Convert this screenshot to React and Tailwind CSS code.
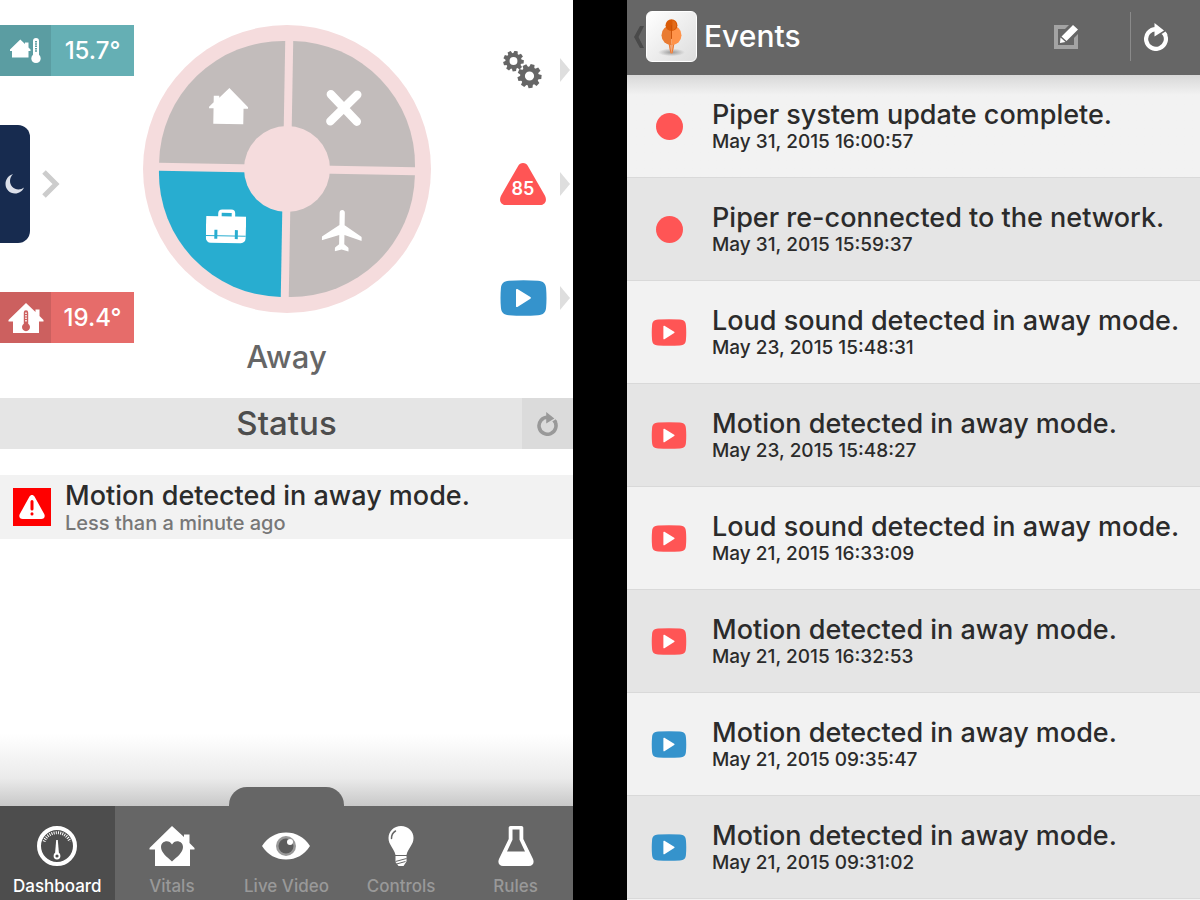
import React from 'react';
import clsx from 'clsx';

const EVENTS = [
  { kind: 'system', title: 'Piper system update complete.', date: 'May 31, 2015 16:00:57' },
  { kind: 'system', title: 'Piper re-connected to the network.', date: 'May 31, 2015 15:59:37' },
  { kind: 'alarm', title: 'Loud sound detected in away mode.', date: 'May 23, 2015 15:48:31' },
  { kind: 'alarm', title: 'Motion detected in away mode.', date: 'May 23, 2015 15:48:27' },
  { kind: 'alarm', title: 'Loud sound detected in away mode.', date: 'May 21, 2015 16:33:09' },
  { kind: 'alarm', title: 'Motion detected in away mode.', date: 'May 21, 2015 16:32:53' },
  { kind: 'clip', title: 'Motion detected in away mode.', date: 'May 21, 2015 09:35:47' },
  { kind: 'clip', title: 'Motion detected in away mode.', date: 'May 21, 2015 09:31:02' },
];

/* ---------- Icons ---------- */

function HomeIcon() {
  return (
    <svg viewBox="0 0 40 40" className="size-10" fill="#fff">
      <path d="M21 0 40 19v1.500h-4.500V36H5.500V20.500H1V19l4.500-4.500V8h5.500v2z" />
    </svg>
  );
}

function OffIcon() {
  return (
    <svg viewBox="0 0 40 40" className="size-10" stroke="#fff" strokeWidth="8.4" strokeLinecap="round">
      <path d="M6.500 4.500 33 31.500M33 4.500 6.500 31.500" />
    </svg>
  );
}

function BriefcaseIcon() {
  return (
    <svg viewBox="0 0 40 40" className="size-10">
      <path
        fill="#fff"
        fillRule="evenodd"
        d="M0 8.500h12V5.500a4 4 0 0 1 4-4h9a4 4 0 0 1 4 4v3h11V30a5 5 0 0 1-5 5H5a5 5 0 0 1-5-5zM15.500 8.500h10V5h-10z"
      />
      <path stroke="#28add0" d="M0 28h40" />
      <path stroke="#28add0" strokeWidth="3" d="M10 22v9M30.500 22v9" />
    </svg>
  );
}

function PlaneIcon() {
  return (
    <svg viewBox="0 0 40 42" className="h-[42px] w-10" fill="#fff">
      <path d="M20 0c1.800 0 2.600 1.300 2.600 3v12.200L39.500 26.500c.4.300.5.600.5 1v3.200L22.600 25v9.300l3.900 3c.3.300.4.600.4 1v3L20 39.500l-6.700 1.800v-3c0-.4.100-.7.400-1l3.700-3V25L0 30.700v-3.200c0-.4.100-.7.500-1l16.900-11.300V3c0-1.700.8-3 2.600-3z" />
    </svg>
  );
}

function OutdoorIcon() {
  return (
    <svg viewBox="0 0 32 26" className="h-[26px] w-8">
      <path fill="#fff" d="M10.300 1.500 15 6V4.500h3.500v5l2 2V13h-2v6.500H2V13H0v-1.500z" />
      <path fill="#fff" d="M23 3a3 3 0 0 1 6 0v13.800a4.700 4.700 0 1 1-6 0z" />
      <path stroke="#5b9da2" strokeWidth="2" strokeDasharray="1.500 .8" d="M26 3v11" />
    </svg>
  );
}

function IndoorIcon() {
  return (
    <svg viewBox="0 0 36 32" className="h-8 w-9">
      <path fill="#fff" d="m18 1 9.500 9V7.500h4V14l4 4v1.500H31V31H5V19.500H.5V18z" />
      <path fill="#cc605f" d="M15.800 10.500a2.200 2.200 0 0 1 4.400 0v11.300a4 4 0 1 1-4.400 0z" />
      <path stroke="#fff" strokeWidth="1.500" strokeDasharray="1.500 1" d="M18 10.500v9" />
    </svg>
  );
}

function MoonIcon() {
  return (
    <svg viewBox="0 0 20 20" className="size-5" fill="#dce0ea">
      <path d="M8 0C3.500 1.500.5 5.300.5 10c0 5.300 4.300 9.500 9.500 9.500 4 0 7.600-2.500 9-6-1.500 1.200-3.500 2-5.500 2-4.800 0-8.500-3.700-8.500-8.500C5 4.300 6.200 1.800 8 0z" />
    </svg>
  );
}

function Gear({ x, y, r }) {
  return (
    <g transform={`translate(${x} ${y}) scale(${r / 12})`}>
      {[0, 40, 80, 120, 160, 200, 240, 280, 320].map((angle) => (
        <path key={angle} d="M-2.900-7-2-12H2l.9 5z" fill="#666" transform={`rotate(${angle + 15})`} />
      ))}
      <circle r="7" fill="none" stroke="#666" strokeWidth="4.800" />
    </g>
  );
}

function GearsIcon() {
  return (
    <svg viewBox="0 0 40 38" className="h-[38px] w-10">
      <Gear x={10.5} y={10} r={10.3} />
      <Gear x={26.5} y={25} r={12} />
    </svg>
  );
}

function TriangleIcon() {
  return (
    <svg viewBox="0 0 46 42" className="h-[42px] w-[46px]" fill="#ff5555">
      <path d="M18 3.200c2-4.200 8-4.200 10 0l17 29.500c2.300 4.600.3 9.300-5 9.300H6c-5.300 0-7.300-4.700-5-9.300z" />
    </svg>
  );
}

function PlayIcon({ className }) {
  return (
    <svg viewBox="0 0 47 36" className={className}>
      <path fill="currentColor" d="M9 .8Q23.500-.2 38 .8c5.500.4 7.700 2.700 8.100 7.700q.8 9.500 0 19c-.4 5-2.600 7.300-8.100 7.700q-14.500 1-29 0c-5.500-.4-7.700-2.700-8.100-7.700q-.8-9.500 0-19C1.300 3.500 3.500 1.200 9 .8z" />
      <path fill="#fff" d="M16 9.800c0-.8.600-1.200 1.400-.7l13 8c.7.500.7 1.100 0 1.600l-13 8.200c-.8.500-1.400.1-1.400-.7z" />
    </svg>
  );
}

function RefreshIcon({ className }) {
  return (
    <svg viewBox="0 0 24 28" className={className}>
      <path fill="none" stroke="currentColor" strokeWidth="4.200" d="M12 6.100A9.900 9.900 0 1 0 20.300 10.600" />
      <path fill="currentColor" d="M10.500 0 20 7.500l-9.500 6zM17.500 11l4-2.500 2 3-3 2z" />
    </svg>
  );
}

function EditIcon() {
  return (
    <svg viewBox="0 0 25 26" className="h-[26px] w-[25px]">
      <path fill="#a3a3a3" d="M0 1h15l-4 4H4v16h16v-7l4-4v15H0z" />
      <path fill="#fff" d="M19 1 24 5.500 12.500 17 7.500 12.500zM6.500 13.500l5 4.500-5.500 1z" />
    </svg>
  );
}

function WarningIcon() {
  return (
    <svg viewBox="0 0 26 24" className="h-6 w-[26px]">
      <path fill="#fff" d="M10.500 1.600c1-2.100 4-2.100 5 0l9.700 17.400c1.300 2.700 0 5-3 5H3.800c-3 0-4.300-2.300-3-5z" />
      <path stroke="#f00" strokeWidth="3" strokeLinecap="round" d="M13 6.500v7.500M13 18.700v.2" />
    </svg>
  );
}

function PiperLogo() {
  return (
    <svg viewBox="0 0 51 51" className="size-full">
      <defs>
        <radialGradient id="pin-shadow">
          <stop offset="0" stopColor="#999" />
          <stop offset="1" stopColor="#999" stopOpacity="0" />
        </radialGradient>
      </defs>
      <ellipse cx="25.500" cy="42" rx="14" ry="4" fill="url(#pin-shadow)" />
      <path fill="#f4a878" d="M22.500 33h6l-1.800 10h-2.400z" />
      <path stroke="#e8762f" d="m23 33 2 10M28 33l-2 10" />
      <path fill="#e97b32" d="M25.500 13.700a10.400 10.400 0 0 0 0 20.800z" />
      <path fill="#ff934a" d="M25.500 13.700a10.400 10.400 0 0 1 0 20.800z" />
      <circle cx="25.500" cy="13.700" r="6.200" fill="#d95a07" />
      <path fill="#e26c1b" d="M26.500 8.500a5.500 5.500 0 0 1 0 10.500z" />
      <path stroke="#c95208" d="M25.500 14v14" />
    </svg>
  );
}

function DashboardIcon() {
  return (
    <svg viewBox="0 0 40 40" className="size-10" fill="none" stroke="#fff">
      <circle cx="20" cy="20" r="18" strokeWidth="4" />
      <path strokeWidth="3" strokeDasharray="1 1.200" d="M7 15.500a14 14 0 0 1 26 0" />
      <path fill="#fff" stroke="none" d="M19.200 14h1.600l1.200 14h-4z" />
      <circle cx="20" cy="30" r="2.500" strokeWidth="1.800" />
    </svg>
  );
}

function VitalsIcon() {
  return (
    <svg viewBox="0 0 46 40" className="h-10 w-[46px]">
      <path fill="#fff" d="m23 0 12 11V8.500h5.500V17l5 5v1.500H41V40H6V23.500H.5V22z" />
      <path fill="#666" d="M23 35.500C18 31 12 26.500 12 21c0-6.500 8.500-8 11-2.500C25.500 13 34 14.500 34 21c0 5.500-6 10-11 14.500z" />
    </svg>
  );
}

function EyeIcon() {
  return (
    <svg viewBox="0 0 48 40" className="h-10 w-12">
      <path fill="#fff" d="M0 20C6 11 14 6.500 24 6.500S42 11 48 20C42 29 34 33.500 24 33.500S6 29 0 20z" />
      <circle cx="24" cy="20" r="10" fill="#999" />
      <circle cx="24" cy="20" r="7.500" fill="#5c5c5c" />
      <circle cx="28" cy="16" r="3" fill="#fff" />
    </svg>
  );
}

function BulbIcon() {
  return (
    <svg viewBox="0 0 26 40" className="h-10 w-[26px]">
      <path fill="#fff" d="M13 0c7 0 12.500 5.300 12.500 12 0 7-5.500 10-7 17v6.500L15.500 40h-5L7.500 36v-7C6 22 .5 19 .5 12 .5 5.300 6 0 13 0z" />
      <path fill="none" stroke="#666" strokeWidth="1.500" strokeLinecap="round" d="M3.500 12.500c0-3.500 1.300-6 4-7.500" />
      <path stroke="#666" d="M7 29.500h12M7.500 35.500l11-3M8.500 38l9-2.500" />
    </svg>
  );
}

function FlaskIcon() {
  return (
    <svg viewBox="0 0 36 40" className="h-10 w-9">
      <path
        fill="#fff"
        fillRule="evenodd"
        d="M12.500 0h11c1 0 1.800.8 1.800 1.800V13l9.700 20c1.700 4-.4 7-4 7H5c-3.600 0-5.700-3-4-7l9.700-20V1.800c0-1 .8-1.800 1.800-1.800zM14.500 3.500v10.300L9 25.500h18l-5.500-11.700V3.500z"
      />
    </svg>
  );
}

/* ---------- Dashboard ---------- */

function TempBadge({ icon, value, iconBg, valueBg }) {
  return (
    <div className="flex h-[51px] text-2xl font-medium text-white">
      <div className={clsx('flex w-[51px] items-center justify-center', iconBg)}>{icon}</div>
      <div className={clsx('flex w-[83px] items-center justify-center', valueBg)}>{value}</div>
    </div>
  );
}

function ModeWheel() {
  return (
    <div className="relative size-72 rounded-full bg-[#f5dcdd] p-4">
      <div className="grid size-full rotate-1 grid-cols-2 grid-rows-2 gap-2">
        <button aria-label="Home" className="flex items-end justify-end rounded-tl-full bg-[#c2bcbb] p-9">
          <HomeIcon />
        </button>
        <button aria-label="Off" className="flex items-end justify-start rounded-tr-full bg-[#c2bcbb] py-9 pl-8">
          <OffIcon />
        </button>
        <button aria-label="Away" aria-pressed="true" className="flex items-start justify-end rounded-bl-full bg-[#28add0] p-9">
          <BriefcaseIcon />
        </button>
        <button aria-label="Vacation" className="flex items-start justify-start rounded-br-full bg-[#c2bcbb] py-9 pl-8">
          <PlaneIcon />
        </button>
      </div>
      <div className="absolute inset-0 m-auto size-[86px] rounded-full bg-[#f5dcdd]" />
    </div>
  );
}

function SideLink({ label, children }) {
  return (
    <a href="#" aria-label={label} className="flex h-12 items-center gap-[13px] pr-[3px]">
      <span className="flex w-12 justify-center">{children}</span>
      <svg viewBox="0 0 10 24" className="h-6 w-2.5" fill="#dedede">
        <path d="M0 0 10 12 0 24z" />
      </svg>
    </a>
  );
}

function NavItem({ label, icon, active }) {
  return (
    <a
      href="#"
      className={clsx(
        'flex flex-col items-center gap-2 pt-5 pb-1 text-[17px] leading-6 font-medium',
        active ? 'bg-[#4d4d4d] text-white' : 'text-[#999]'
      )}
    >
      {icon}
      {label}
    </a>
  );
}

function Dashboard() {
  return (
    <section className="flex min-h-screen flex-col bg-white">
      <div className="grid grid-cols-[1fr_auto_1fr] pt-[25px]">
        <div className="flex flex-col items-start gap-[49px]">
          <TempBadge icon={<OutdoorIcon />} value="15.7°" iconBg="bg-[#5b9da2]" valueBg="bg-[#65afb4]" />
          <div className="flex items-center gap-3">
            <button aria-label="Night mode" className="flex h-[118px] w-[30px] items-center justify-center rounded-r-xl bg-[#172b4f]">
              <MoonIcon />
            </button>
            <svg viewBox="0 0 18 28" className="h-7 w-[18px]" fill="none" stroke="#ccc" strokeWidth="5">
              <path d="m2 2 12 12L2 26" />
            </svg>
          </div>
          <TempBadge icon={<IndoorIcon />} value="19.4°" iconBg="bg-[#cc605f]" valueBg="bg-[#e66c6a]" />
        </div>

        <div className="flex flex-col items-center">
          <ModeWheel />
          <p className="pt-6 text-[31px] leading-10 font-medium text-[#666]">Away</p>
        </div>

        <div className="flex flex-col items-end gap-[66px] pt-[21px]">
          <SideLink label="Settings">
            <GearsIcon />
          </SideLink>
          <SideLink label="Alerts">
            <span className="grid place-items-center">
              <span className="col-start-1 row-start-1">
                <TriangleIcon />
              </span>
              <span className="col-start-1 row-start-1 pt-2.5 text-lg font-semibold text-white">85</span>
            </span>
          </SideLink>
          <SideLink label="Videos">
            <PlayIcon className="h-9 w-[47px] text-[#3593cc]" />
          </SideLink>
        </div>
      </div>

      <header className="mt-[21px] grid h-[51px] grid-cols-[1fr_auto_1fr] items-center bg-[#e5e5e5]">
        <h2 className="col-start-2 text-[33px] font-medium text-[#4d4d4d]">Status</h2>
        <button aria-label="Refresh status" className="flex h-full w-[51px] items-center justify-center justify-self-end bg-[#dbdbdb] text-[#999]">
          <RefreshIcon className="h-6 w-[21px]" />
        </button>
      </header>

      <div className="mt-[26px] flex h-16 items-center gap-3.5 bg-[#f2f2f2] pl-[13px]">
        <span className="flex size-[38px] items-center justify-center bg-[#f00]">
          <WarningIcon />
        </span>
        <div className="pt-1">
          <p className="text-[27px] leading-7 font-medium text-[#2b2b2b]">Motion detected in away mode.</p>
          <p className="text-xl leading-[26px] font-medium text-[#777]">Less than a minute ago</p>
        </div>
      </div>

      <div className="mt-auto flex h-20 items-end justify-center bg-linear-to-b from-white from-10% via-[#ebebeb] via-65% to-[#c8c8c8]">
        <div className="h-[19px] w-[115px] rounded-t-[18px] bg-[#666]" />
      </div>
      <nav className="grid h-[94px] grid-cols-5 bg-[#666]">
        <NavItem label="Dashboard" icon={<DashboardIcon />} active />
        <NavItem label="Vitals" icon={<VitalsIcon />} />
        <NavItem label="Live Video" icon={<EyeIcon />} />
        <NavItem label="Controls" icon={<BulbIcon />} />
        <NavItem label="Rules" icon={<FlaskIcon />} />
      </nav>
    </section>
  );
}

/* ---------- Events ---------- */

function EventMarker({ kind }) {
  if (kind === 'system') {
    return <span className="size-[27px] rounded-full bg-[#ff5555]" />;
  }
  return <PlayIcon className={clsx('h-[27px] w-9', kind === 'alarm' ? 'text-[#ff5555]' : 'text-[#3593cc]')} />;
}

function Events() {
  return (
    <section className="flex min-h-screen flex-col bg-[#f2f2f2]">
      <header className="flex h-[75px] items-center bg-[#666] pr-8 pb-0.5 pl-[7px] text-white">
        <a href="#" aria-label="Back" className="flex items-center gap-0.5">
          <svg viewBox="0 0 10 22" className="h-[22px] w-2.5" fill="#4a4a4a">
            <path d="M6 0h4L4.500 11 10 22H6L0 11z" />
          </svg>
          <span className="size-[51px] overflow-hidden rounded-md border border-white bg-linear-to-br from-white to-[#ddd]">
            <PiperLogo />
          </span>
        </a>
        <h1 className="pl-[7px] text-[30px] font-medium">Events</h1>
        <button aria-label="Edit" className="mr-[51px] ml-auto">
          <EditIcon />
        </button>
        <button aria-label="Refresh events" className="flex h-[49px] items-center border-l border-[#8a8a8a] pl-[13px]">
          <RefreshIcon className="h-7 w-6" />
        </button>
      </header>

      <ul className="bg-linear-to-b from-[#d8d8d8] to-[#f2f2f2] to-[20px]">
        {EVENTS.map((event, i) => (
          <li
            key={event.date}
            className={clsx('flex h-[103px] items-center gap-[25px] border-b border-[#d9d9d9] pl-6', i > 0 && (i % 2 ? 'bg-[#e5e5e5]' : 'bg-[#f2f2f2]'))}
          >
            <span className="flex w-9 justify-center">
              <EventMarker kind={event.kind} />
            </span>
            <div className="pt-1 whitespace-nowrap text-[#2b2b2b]">
              <p className="text-[27px] leading-7 font-medium">{event.title}</p>
              <p className="text-[19px] leading-[26px] font-medium">{event.date}</p>
            </div>
          </li>
        ))}
      </ul>
    </section>
  );
}

export default function App() {
  return (
    <main className="grid min-h-screen grid-cols-2 gap-[54px] bg-black font-['Inter',sans-serif]">
      <Dashboard />
      <Events />
    </main>
  );
}
